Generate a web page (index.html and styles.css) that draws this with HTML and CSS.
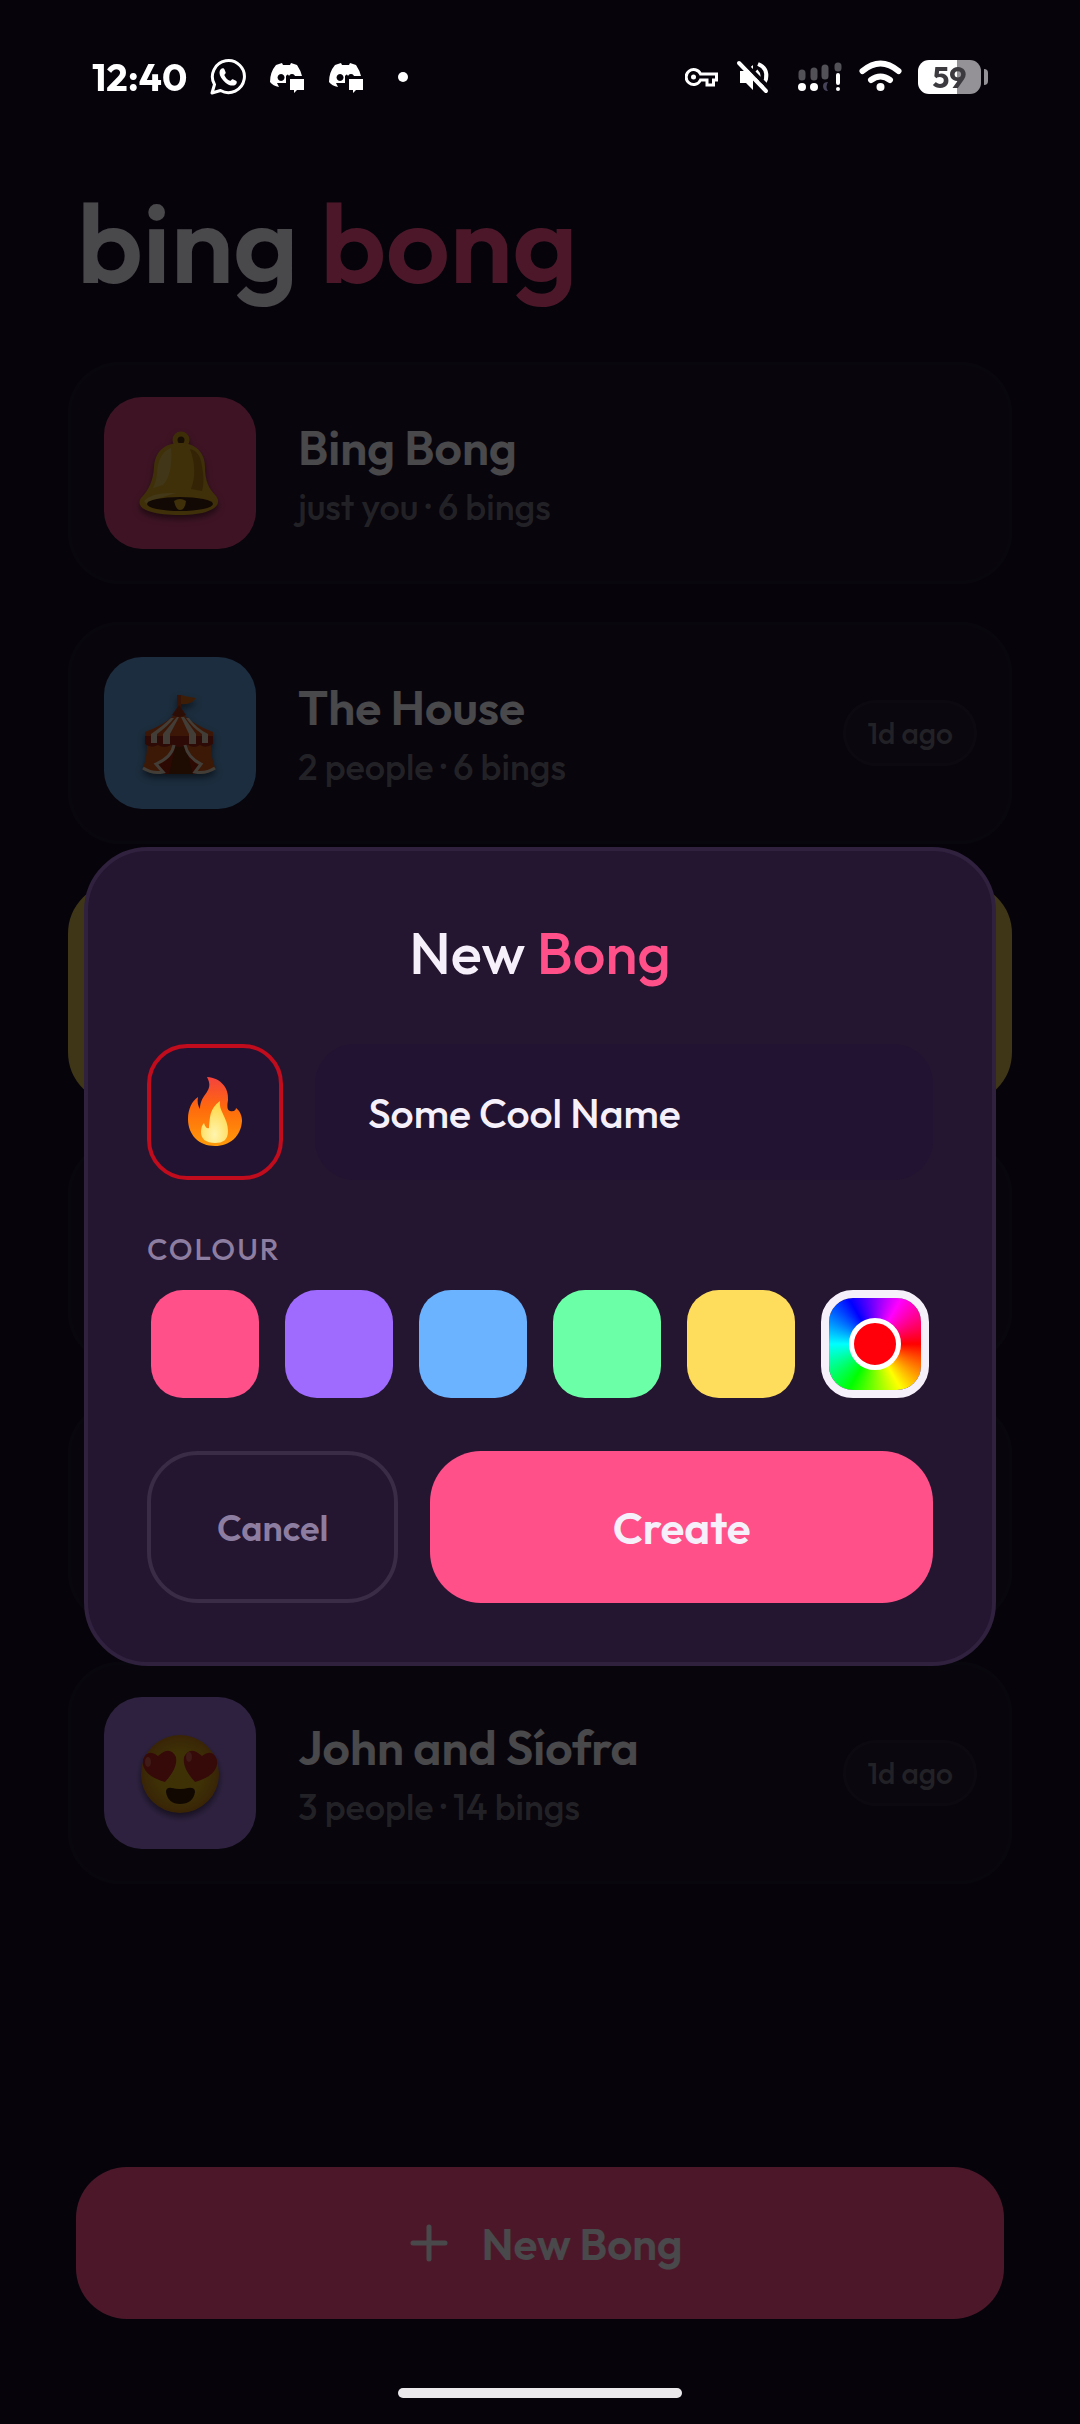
FILE: index.html
```html
<!DOCTYPE html>
<html lang="en">
<head>
    <meta charset="UTF-8">
    <meta name="viewport" content="width=device-width, initial-scale=1.0">
    <title>bing bong</title>
    <link rel="stylesheet" href="styles.css">
</head>
<body>
    <header class="status-bar">
        <div class="status-left">
            <span class="clock">12:40</span>
            <svg width="36" height="36" viewBox="0 0 36 36" fill="none">
                <path d="M2 34 L4.500 25.500 A16 16 0 1 1 10.500 31.500 Z" stroke="#fff" stroke-width="3" stroke-linejoin="round"/>
                <path d="M11 10 C12 9 14 9 14.500 10.500 L15.700 13.500 C16 14.500 14.200 15.500 14.400 16.200 C15.500 18.800 17.500 20.800 20 21.800 C21 22 21.800 19.800 22.800 20.200 L26 21.800 C27.300 22.500 27 24.500 25.500 25.700 C23 27.500 19 26.500 15.500 23.700 C12 20.700 9.500 17 9.500 14 C9.500 12 10 10.800 11 10 Z" fill="#fff"/>
            </svg>
            <svg width="36" height="36" viewBox="0 0 36 36" fill="#fff">
                <path fill-rule="evenodd" d="M7 6 L13 4 L14 6 H21 L22 4 L28 6 Q32 12 33 17 H20 Q19 14 17 17 V24 L8 24 L10 28 Q4 27 1 23 Q1 13 7 6 Z M12 15 a3.500 3.500 0 1 0 .1 0 Z M23 15 a3 3 0 0 0 -3 2 h6 a3 3 0 0 0 -3 -2 Z"/>
                <path d="M21 20 H35 V31 H28 L25 34 V31 H21 Z"/>
            </svg>
            <svg width="36" height="36" viewBox="0 0 36 36" fill="#fff">
                <path fill-rule="evenodd" d="M7 6 L13 4 L14 6 H21 L22 4 L28 6 Q32 12 33 17 H20 Q19 14 17 17 V24 L8 24 L10 28 Q4 27 1 23 Q1 13 7 6 Z M12 15 a3.500 3.500 0 1 0 .1 0 Z M23 15 a3 3 0 0 0 -3 2 h6 a3 3 0 0 0 -3 -2 Z"/>
                <path d="M21 20 H35 V31 H28 L25 34 V31 H21 Z"/>
            </svg>
            <svg width="32" height="36" viewBox="0 0 32 36"><circle cx="16" cy="18" r="5" fill="#fff"/></svg>
        </div>
        <div class="status-right">
            <svg width="34" height="36" viewBox="0 0 34 36" fill="none" stroke="#fff" stroke-width="3">
                <path d="M15.500 15 H31.500 V21 H28.500 V26 H22 V21 H15.500 A7.500 7.500 0 1 1 15.500 15 Z"/>
                <circle cx="8.500" cy="18" r="2.500" fill="#fff" stroke="none"/>
            </svg>
            <svg width="46" height="36" viewBox="0 0 46 36">
                <path d="M5 12 H11 L18 6 V31 L11 24 H5 Z" fill="#fff"/>
                <path d="M21 12 Q26 17 21 23 M23 5 Q33 9 31 20 Q30 24 27 27" fill="none" stroke="#fff" stroke-width="4"/>
                <path d="M7 2 L36 31" stroke="#08050c" stroke-width="4"/>
                <path d="M4 4 L31 32" stroke="#fff" stroke-width="4" stroke-linecap="round"/>
            </svg>
            <svg width="46" height="36" viewBox="0 0 46 36">
                <g stroke="#535158" stroke-width="7" stroke-linecap="round">
                    <path d="M5 14 V18 M17 12 V18 M28 9 V17"/>
                    <path d="M41 7 V9"/>
                </g>
                <path d="M31 23 Q26 23 26 27 Q26 32 31 32 Q28 28 31 23" fill="#46425a"/>
                <circle cx="5" cy="28" r="4" fill="#fff"/>
                <circle cx="17" cy="28" r="4" fill="#fff"/>
                <path d="M41 16 V24" stroke="#fff" stroke-width="4" stroke-linecap="round"/>
                <circle cx="41" cy="30" r="2" fill="#fff"/>
            </svg>
            <svg width="43" height="36" viewBox="0 0 43 36" fill="none" stroke="#fff" stroke-width="6" stroke-linecap="round">
                <path d="M3.500 12 Q21.500 -3 39.500 12"/>
                <path d="M12 21 Q21.500 14 31 21"/>
                <circle cx="21.500" cy="28" r="4" fill="#fff" stroke="none"/>
            </svg>
            <div class="battery"><span>59</span></div>
        </div>
    </header>

    <main>
        <h1>bing <span>bong</span></h1>
        <ul class="bong-list">
            <li class="bong">
                <div class="bong-icon pink">
                    <svg width="84" height="84" viewBox="0 0 84 84">
                        <circle cx="43" cy="9" r="6" fill="#4e2c08" stroke="#d09a18" stroke-width="5"/>
                        <path d="M42 12 C58 12 67 22 67 36 C67 50 71 58 78 65 C86 76 70 84 42 84 C14 84 -4 78 3 67 C11 59 15 50 16 36 C17 21 26 12 42 12 Z" fill="#d2a01e"/>
                        <path d="M52 18 Q60 40 53 58 L64 60 Q67 50 64 35 Q62 20 52 18 Z" fill="#ae7811"/>
                        <path d="M33 17 Q20 22 19 43 Q18 52 15 57 L25 54 Q35 43 33 17 Z" fill="#d9ba50"/>
                        <path d="M6 70 Q14 61 38 62 Q22 66 9 73 Z" fill="#e0bc50"/>
                        <ellipse cx="42" cy="73" rx="33" ry="7" fill="#3e2010"/>
                        <path d="M36 70 Q42 66 48 70 Q47 79 42 79 Q38 79 36 70 Z" fill="#d2a01e"/>
                    </svg>
                </div>
                <div class="bong-text">
                    <h2>Bing Bong</h2>
                    <p>just you · 6 bings</p>
                </div>
            </li>
            <li class="bong">
                <div class="bong-icon blue">
                    <svg width="84" height="84" viewBox="0 0 84 84">
                        <path d="M41 4 V24" stroke="#b5441a" stroke-width="4"/>
                        <path d="M43 4 Q50 6 58 7 Q54 14 43 13 Z" fill="#d0621a"/>
                        <path d="M9 54 H73 Q73 66 77 77 Q70 83 59 82 H23 Q12 83 5 77 Q9 67 9 54 Z" fill="#c95217"/>
                        <path d="M36 53 H48 Q50 68 62 75 L57 83 H26 L20 74 Q34 68 36 53 Z" fill="#981f0c"/>
                        <path d="M38 53 H47 L55 83 H31 Z" fill="#642508"/>
                        <path d="M36 24 H46 Q56 34 75 41 V51 H7 V41 Q26 34 36 24 Z" fill="#c94f18"/>
                        <path d="M7 45 H75 V53 Q68 58 62 54 Q56 58 50 54 Q41 58 33 54 Q26 58 20 54 Q13 58 7 53 Z" fill="#982411"/>
                        <path d="M33 27 Q26 34 13 43 V52 H19 V43 Q30 35 36 27 Z M39 26 L25 43 V53 H32 V43 L41 26 Z M43 26 L51 43 V53 H58 V43 L46 26 Z M48 27 Q54 36 64 43 V52 H70 V43 Q58 37 51 27 Z" fill="#dccdb8"/>
                        <path d="M36 54 Q34 66 18 73 L25 81 Q14 83 5 77 M47 54 Q50 67 63 73 L57 81 Q68 83 77 77" fill="none" stroke="#dccdb8" stroke-width="3"/>
                        <path d="M34 24 L41 14 L48 24 Q41 28 34 24 Z" fill="#98301a"/>
                    </svg>
                </div>
                <div class="bong-text">
                    <h2>The House</h2>
                    <p>2 people · 6 bings</p>
                </div>
                <span class="ago">1d ago</span>
            </li>
            <li class="bong highlight"></li>
            <li class="bong"></li>
            <li class="bong"></li>
            <li class="bong">
                <div class="bong-icon purple">
                    <svg width="84" height="84" viewBox="0 0 84 84">
                        <defs>
                            <radialGradient id="face" cx=".5" cy=".5" r=".5">
                                <stop offset=".55" stop-color="#d0a617"/>
                                <stop offset="1" stop-color="#be7a14"/>
                            </radialGradient>
                        </defs>
                        <circle cx="42" cy="43" r="39" fill="url(#face)"/>
                        <path d="M27 51 Q3 44 5 29 Q9 17 20 25 Q32 14 38 26 Q40 37 27 51 Z" fill="#b3231c"/>
                        <path d="M57 51 Q81 44 79 29 Q75 17 64 25 Q52 14 46 26 Q44 37 57 51 Z" fill="#b3231c"/>
                        <ellipse cx="10" cy="31" rx="3" ry="5" fill="#d2574c"/>
                        <ellipse cx="51" cy="26" rx="3" ry="5" fill="#d2574c"/>
                        <path d="M28 61 Q28 56 34 57 Q42 59 50 57 Q57 56 57 61 Q55 73 42 73 Q30 73 28 61 Z" fill="#3d1b08"/>
                    </svg>
                </div>
                <div class="bong-text">
                    <h2>John and Síofra</h2>
                    <p>3 people · 14 bings</p>
                </div>
                <span class="ago">1d ago</span>
            </li>
        </ul>
    </main>

    <footer>
        <button type="button" class="new-bong">
            <svg width="38" height="38" viewBox="0 0 38 38" stroke="#f6f0fb" stroke-width="5" stroke-linecap="round">
                <path d="M19 3 V35 M3 19 H35"/>
            </svg>
            New Bong
        </button>
        <div class="home-bar"></div>
    </footer>

    <div class="backdrop">
        <form class="modal" role="dialog" aria-labelledby="modal-title">
            <h2 id="modal-title">New <span>Bong</span></h2>
            <div class="name-row">
                <button type="button" class="emoji-btn" aria-label="Emoji">
                    <svg width="72" height="72" viewBox="0 0 72 72">
                        <defs>
                            <linearGradient id="fire" x1="0" y1="0" x2="0" y2="1">
                                <stop offset="0" stop-color="#f4423f"/>
                                <stop offset=".45" stop-color="#ff6a0c"/>
                                <stop offset="1" stop-color="#ff9a0a"/>
                            </linearGradient>
                            <radialGradient id="core" cx=".5" cy=".8" r=".7">
                                <stop offset="0" stop-color="#fff5ae"/>
                                <stop offset="1" stop-color="#ffd84c"/>
                            </radialGradient>
                        </defs>
                        <path d="M28 1 C42 2 50 12 49 24 C48 30 48 34 51 35 C55 36 57 34 57 32 C61 35 63 40 63 45 C62 60 51 70 36 70 C20 70 9 59 9 43 C9 33 13 25 19 21 C18 26 19 30 21 33 C21 17 36 16 28 1 Z" fill="url(#fire)"/>
                        <path d="M41 25 C39 34 49 42 49 55 C49 64 44 67 36 67 C27 67 22 63 22 56 C22 52 23 49 25 47 C26 51 28 53 30 52 C31 42 30 33 41 25 Z" fill="url(#core)"/>
                    </svg>
                </button>
                <input type="text" class="name-input" aria-label="Name" value="Some Cool Name">
            </div>
            <fieldset>
                <legend>COLOUR</legend>
                <div class="swatches">
                    <input type="radio" name="colour" class="swatch pink" aria-label="Pink">
                    <input type="radio" name="colour" class="swatch purple" aria-label="Purple">
                    <input type="radio" name="colour" class="swatch blue" aria-label="Blue">
                    <input type="radio" name="colour" class="swatch green" aria-label="Green">
                    <input type="radio" name="colour" class="swatch yellow" aria-label="Yellow">
                    <input type="radio" name="colour" class="swatch custom" aria-label="Custom" checked>
                </div>
            </fieldset>
            <div class="actions">
                <button type="button" class="cancel">Cancel</button>
                <button type="submit" class="create">Create</button>
            </div>
        </form>
    </div>
</body>
</html>
```
FILE: styles.css
```css
* {
    box-sizing: border-box;
}

body {
    margin: 0;
    min-height: 100vh;
    display: flex;
    flex-direction: column;
    background-color: #170d25;
    color: #f6f0fb;
    font-family: Outfit, Lato, sans-serif;
}

h1, h2, p, ul, fieldset, legend {
    margin: 0;
    padding: 0;
    border: 0;
}

button, input {
    font-family: inherit;
    color: inherit;
    margin: 0;
}

svg {
    display: block;
    flex: none;
}

/* status bar */
.status-bar {
    position: relative;
    z-index: 2;
    height: 156px;
    padding: 0 92px 2px;
    display: flex;
    justify-content: space-between;
    align-items: center;
    color: #fff;
}

.status-left,
.status-right {
    display: flex;
    align-items: center;
}

.status-left {
    gap: 23px;
}

.status-right {
    gap: 16px;
}

.clock {
    font-size: 38px;
    font-weight: 700;
    line-height: 38px;
}

.battery {
    position: relative;
    width: 63px;
    height: 34px;
    margin-right: 7px;
    border-radius: 11px;
    background: linear-gradient(to right, #fff 62%, #949197 62%);
    color: #3c3a3e;
    font-size: 30px;
    font-weight: 700;
    line-height: 34px;
    text-align: center;
}

.battery::after {
    content: "";
    position: absolute;
    top: 9px;
    right: -7px;
    width: 4px;
    height: 16px;
    border-radius: 0 4px 4px 0;
    background-color: #949197;
}

/* list */
main {
    flex: 1;
    padding: 0 68px;
}

h1 {
    padding: 16px 9px 50px;
    font-size: 112px;
    font-weight: 600;
    line-height: 140px;
}

h1 span,
.modal h2 span {
    color: #ff5089;
}

.bong-list {
    list-style: none;
    display: flex;
    flex-direction: column;
    gap: 38px;
}

.bong {
    min-height: 222px;
    padding: 32px 32px 32px 33px;
    display: flex;
    align-items: center;
    gap: 42px;
    border: 3px solid rgba(255, 255, 255, 0.03);
    border-radius: 52px;
    background-color: rgba(255, 255, 255, 0.02);
}

.bong.highlight {
    background-color: #d2b450;
    border-color: #d2b450;
}

.bong-icon {
    flex: none;
    width: 152px;
    height: 152px;
    display: flex;
    align-items: center;
    justify-content: center;
    border-radius: 38px;
}

.bong-icon svg {
    filter: drop-shadow(0 4px 3px rgba(0, 0, 0, 0.5));
}

.bong-icon.pink {
    background-color: #cf4378;
}

.bong-icon.blue {
    background-color: #5d96cf;
}

.bong-icon.purple {
    background-color: #9971d5;
}

.bong-text {
    flex: 1;
    padding-top: 5px;
}

.bong-text h2 {
    font-size: 48px;
    font-weight: 600;
    line-height: 62px;
}

.bong-text p {
    font-size: 36px;
    font-weight: 500;
    line-height: 58px;
    color: #747080;
}

.ago {
    height: 66px;
    padding: 0 21px;
    border: 3px solid rgba(255, 255, 255, 0.04);
    border-radius: 33px;
    background-color: rgba(255, 255, 255, 0.03);
    color: #747080;
    font-size: 30px;
    font-weight: 500;
    line-height: 60px;
}

/* bottom */
footer {
    padding: 0 76px 26px;
}

.new-bong {
    width: 100%;
    height: 152px;
    padding: 0 0 0 12px;
    display: flex;
    align-items: center;
    justify-content: center;
    gap: 34px;
    border: 0;
    border-radius: 51px;
    background-color: #ff5089;
    font-size: 44px;
    font-weight: 600;
}

.home-bar {
    position: relative;
    z-index: 2;
    width: 284px;
    height: 10px;
    margin: 69px auto 0;
    border-radius: 5px;
    background-color: #ebe9ec;
}

/* modal, centred in the area under the status bar */
.backdrop {
    position: fixed;
    inset: 0;
    z-index: 1;
    padding: 89px 84px 0;
    display: flex;
    align-items: center;
    background-color: rgba(0, 0, 0, 0.7);
}

.modal {
    width: 100%;
    padding: 59px;
    border: 4px solid #30213f;
    border-radius: 64px;
    background-color: #241530;
}

.modal h2 {
    margin-bottom: 48px;
    font-size: 58px;
    font-weight: 500;
    line-height: 86px;
    text-align: center;
}

.name-row {
    display: flex;
    gap: 32px;
    margin-bottom: 50px;
}

.emoji-btn {
    flex: none;
    width: 136px;
    height: 136px;
    padding: 0;
    display: flex;
    align-items: center;
    justify-content: center;
    border: 4px solid #c00c1c;
    border-radius: 40px;
    background-color: #231333;
}

.name-input {
    flex: 1;
    min-width: 0;
    padding: 2px 53px 0;
    border: 0;
    border-radius: 40px;
    background-color: #231333;
    font-size: 41px;
    font-weight: 500;
}

legend {
    margin-bottom: 22px;
    font-size: 30px;
    font-weight: 500;
    line-height: 38px;
    letter-spacing: 2px;
    color: #8d7da0;
}

.swatches {
    display: flex;
    justify-content: space-between;
    padding: 0 4px;
}

.swatch {
    appearance: none;
    width: 108px;
    height: 108px;
    display: flex;
    align-items: center;
    justify-content: center;
    border-radius: 32px;
}

.swatch.pink {
    background-color: #ff5089;
}

.swatch.purple {
    background-color: #9f6bff;
}

.swatch.blue {
    background-color: #6bb3ff;
}

.swatch.green {
    background-color: #6bffa7;
}

.swatch.yellow {
    background-color: #ffdd5c;
}

.swatch.custom {
    background: conic-gradient(from 90deg, red, yellow, lime, cyan, blue, magenta, red) padding-box;
}

.swatch:checked {
    border: 8px solid #f6f0fb;
}

.swatch.custom::after {
    content: "";
    width: 42px;
    height: 42px;
    border: 5px solid #fff;
    border-radius: 50%;
    background-color: #ff000a;
    box-sizing: content-box;
}

.actions {
    display: grid;
    grid-template-columns: 1fr 2fr;
    gap: 32px;
    margin-top: 53px;
}

.actions button {
    height: 152px;
    padding: 0;
    border-radius: 51px;
}

.cancel {
    border: 4px solid #3a2b47;
    background: none;
    color: #8d7da0;
    font-size: 36px;
    font-weight: 600;
}

.create {
    border: 0;
    background-color: #ff5089;
    font-size: 44px;
    font-weight: 600;
}
```
